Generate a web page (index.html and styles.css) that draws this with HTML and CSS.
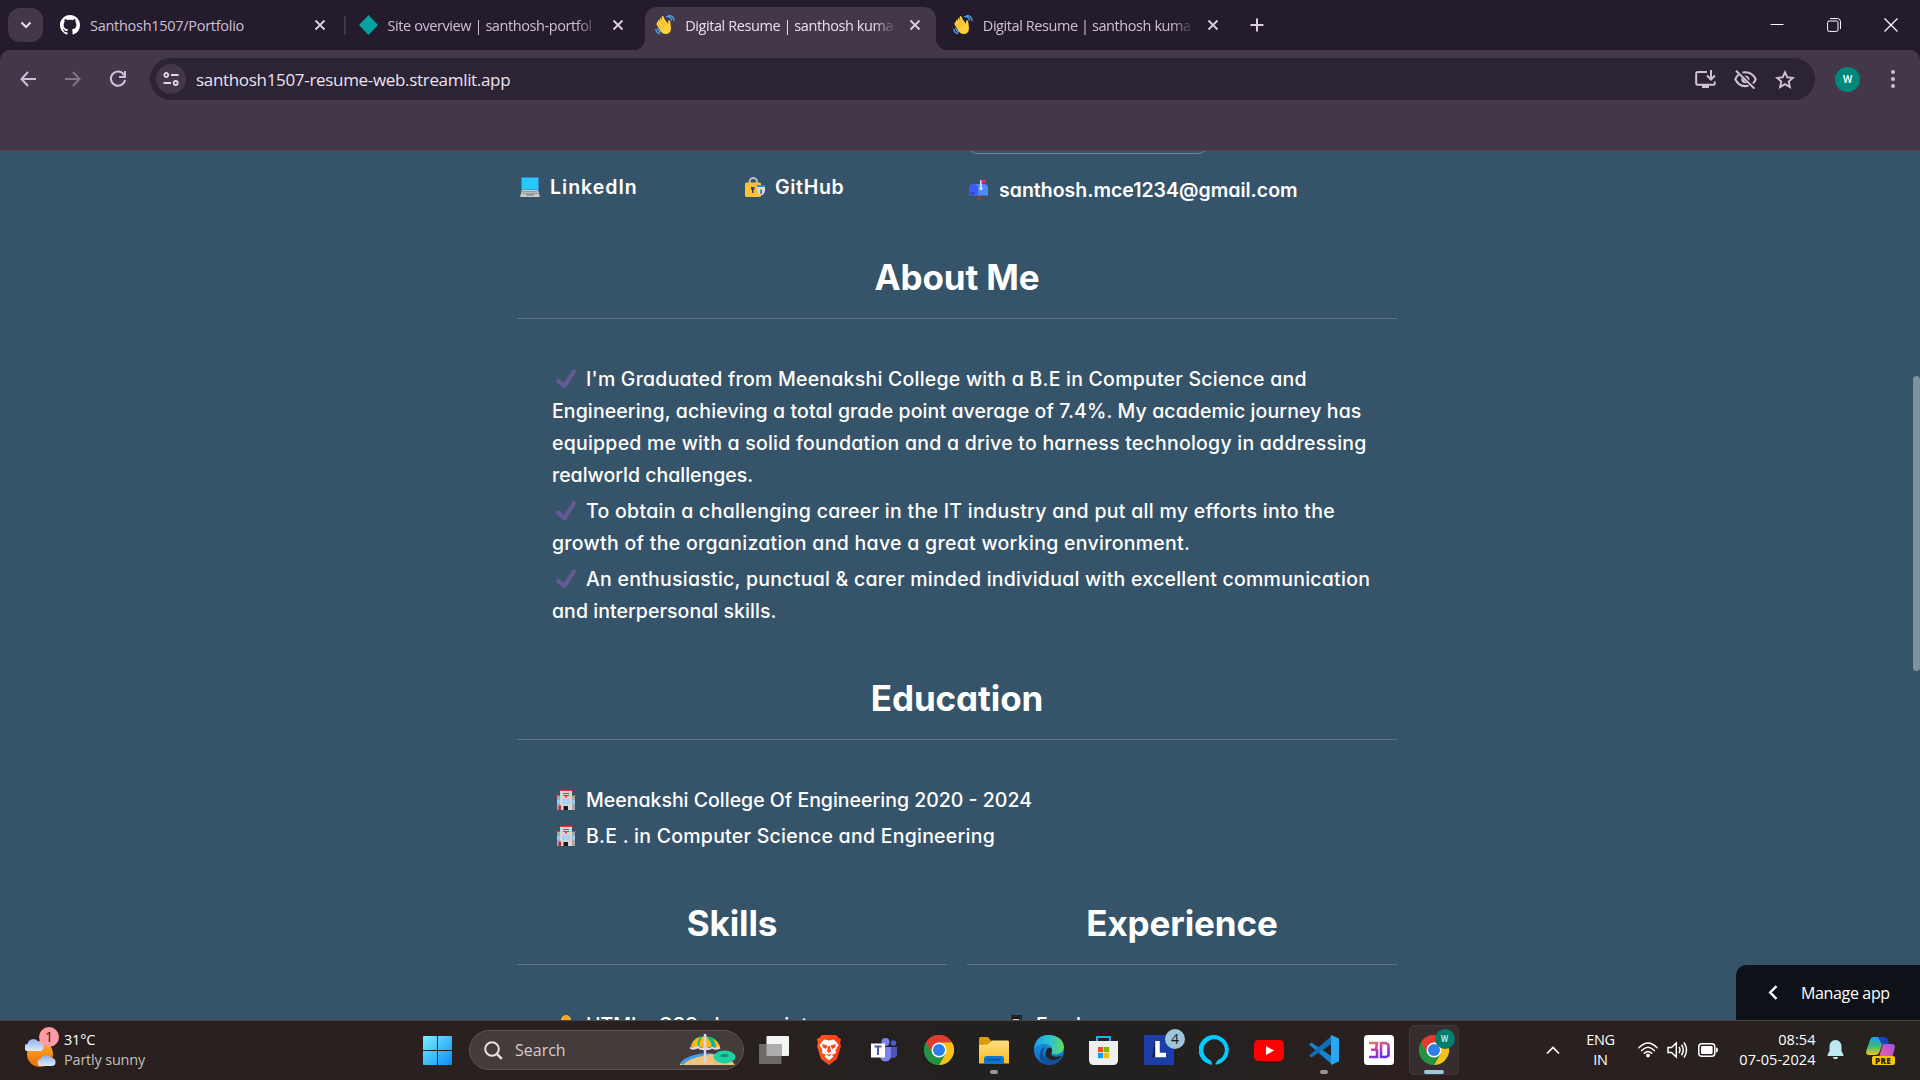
FILE: index.html
```html
<!DOCTYPE html>
<html lang="en">
<head>
<meta charset="utf-8">
<title>Digital Resume | santhosh kumar</title>
<link rel="stylesheet" href="styles.css">
</head>
<body>
<svg class="defs" width="0" height="0" aria-hidden="true">
  <defs>
    <linearGradient id="gWin" gradientUnits="userSpaceOnUse" x1="0" y1="0" x2="29" y2="29"><stop offset="0" stop-color="#7cf0ff"/><stop offset="1" stop-color="#0a8df5"/></linearGradient>
    <linearGradient id="gSun" x1="0" y1="0" x2="0" y2="1"><stop offset="0" stop-color="#fbb320"/><stop offset="1" stop-color="#ee6a10"/></linearGradient>
    <linearGradient id="gCloud" x1="0" y1="0" x2="0" y2="1"><stop offset="0" stop-color="#8fb0ee"/><stop offset="1" stop-color="#dfeafc"/></linearGradient>
    <linearGradient id="gFold" x1="0" y1="0" x2="0" y2="1"><stop offset="0" stop-color="#ffe083"/><stop offset="1" stop-color="#fcb91e"/></linearGradient>
    <linearGradient id="gEdge" x1="0" y1="0" x2="1" y2="0"><stop offset="0" stop-color="#1f9de6"/><stop offset=".55" stop-color="#2fc3cf"/><stop offset="1" stop-color="#63dd55"/></linearGradient>
    <linearGradient id="gEdge2" x1="0" y1="0" x2="0" y2="1"><stop offset="0" stop-color="#1b9de2"/><stop offset="1" stop-color="#1066c4"/></linearGradient>
    <linearGradient id="g30" gradientUnits="userSpaceOnUse" x1="5" y1="6" x2="12" y2="24"><stop offset="0" stop-color="#f08a3c"/><stop offset=".5" stop-color="#c840a8"/><stop offset="1" stop-color="#6a2ff0"/></linearGradient>
    <linearGradient id="gBrave" x1="0" y1="0" x2="1" y2="0"><stop offset="0" stop-color="#ff5a1a"/><stop offset="1" stop-color="#fb3a12"/></linearGradient>
    <linearGradient id="gCop" x1="0" y1="0" x2="0" y2="1"><stop offset="0" stop-color="#1da0f0"/><stop offset=".5" stop-color="#38b87c"/><stop offset="1" stop-color="#f2c821"/></linearGradient>
    <linearGradient id="gCop2" x1="1" y1="0" x2="0" y2="1"><stop offset="0" stop-color="#a24bea"/><stop offset="1" stop-color="#ff6a80"/></linearGradient>
    <symbol id="close" viewBox="0 0 12 12"><path d="M1.500 1.500l9 9M10.500 1.500l-9 9" fill="none" stroke="currentColor" stroke-width="1.800"/></symbol>
    <symbol id="wave" viewBox="0 0 20 20">
      <path d="M3 6.500 Q2.700 5 4 4.700 L5 6 Q4.200 3.200 5.600 2.800 L7 5 Q6 1 7.600 1 Q8.900 1 9.500 4 L13 9 Q12.800 5.500 14 5 Q15.300 4.800 15.400 8 L16 13 Q16 19 10.500 19 Q7 19 5 15 L1.500 9.500 Q1 7.500 3 6.500Z" fill="#fdcf3d"/>
      <path d="M5 6l4 6M7 4.800l3.800 6M3.200 8.500l4 5.500" stroke="#e2a21c" stroke-width=".7" fill="none"/>
      <path d="M11.500 1.700Q15.500 1 16.500 5M13.500 .6Q18.500 .5 19 5.500M.8 14.500Q1.300 17.800 4.600 18.500M2.700 13.500Q3.300 16 5.600 16.800" fill="none" stroke="#4aa3e6" stroke-width="1.300" stroke-linecap="round"/>
    </symbol>
    <symbol id="check" viewBox="0 0 20 20"><path d="M2.300 11.800L8.300 17.200L17.700 2.600" fill="none" stroke="#635994" stroke-width="4.400" stroke-linecap="round" stroke-linejoin="round"/></symbol>
    <symbol id="school" viewBox="0 0 20 20">
      <path d="M1 6h18v14H1z" fill="#a9a9ad"/><path d="M4 1h12v19H4z" fill="#d5d5d8"/>
      <path d="M4 0h12v1H4zM0 5h4v1H0zM16 5h4v1h-4zM7 3h6v1H7zM7 5h6v1H7zM9 6h2v1.500H9z" fill="#f8312f"/>
      <path d="M1 10h2.500v3.500H1zM16.500 10H19v3.500h-2.500zM6.500 9h3v5h-3zM10.500 9h3v5h-3z" fill="#8fd0ff"/>
      <path d="M6.500 11.300h7" stroke="#d5d5d8" stroke-width=".6"/>
      <path d="M7.500 16h4.500v4H7.500z" fill="#1c1c1c"/><path d="M2.500 15.500h2.500V20H2.500z" fill="#c8282f"/>
    </symbol>
    <symbol id="chrome" viewBox="0 0 30 30">
      <circle cx="15" cy="15" r="15" fill="#229342"/>
      <path d="M15 15L2 7.500A15 15 0 0 1 28 7.500H15Z" fill="#e33b2e"/>
      <path d="M15 7.500H28A15 15 0 0 1 15 30L21.500 18.700Z" fill="#fbc116"/>
      <path d="M2 7.500L8.600 18.800L15 8.500V4Z" fill="#e33b2e"/>
      <path d="M2 7.500A15 15 0 0 0 15 30L21.500 18.800L15 22L8.600 18.800Z" fill="#229342"/>
      <circle cx="15" cy="15" r="7.500" fill="#fff"/><circle cx="15" cy="15" r="6" fill="#2f7de9"/>
    </symbol>
  </defs>
</svg>

<header class="tabstrip">
  <button class="tab-search"><svg width="12" height="8" viewBox="0 0 12 8"><path d="M1.500 1.500L6 6L10.500 1.500" fill="none" stroke="currentColor" stroke-width="2"/></svg></button>
  <nav class="tabs">
    <div class="tab">
      <svg class="fav" viewBox="0 0 16 16"><path fill="#fff" d="M8 0C3.580 0 0 3.580 0 8c0 3.540 2.290 6.530 5.470 7.590.4.070.55-.17.55-.38 0-.19-.01-.82-.01-1.490-2.010.37-2.530-.49-2.690-.94-.09-.23-.48-.94-.82-1.130-.28-.15-.68-.52-.01-.53.63-.01 1.080.58 1.230.82.72 1.210 1.870.87 2.330.66.07-.52.28-.87.51-1.070-1.780-.2-3.640-.89-3.640-3.950 0-.87.31-1.590.82-2.150-.08-.2-.36-1.020.08-2.120 0 0 .67-.21 2.200.82.64-.18 1.320-.27 2-.27s1.360.09 2 .27c1.530-1.040 2.200-.82 2.200-.82.44 1.100.16 1.920.08 2.120.51.56.82 1.270.82 2.150 0 3.070-1.870 3.750-3.650 3.950.29.25.54.73.54 1.480 0 1.070-.01 1.930-.01 2.200 0 .21.15.46.55.38A8.010 8.010 0 0 0 16 8c0-4.420-3.580-8-8-8z"/></svg>
      <span class="title">Santhosh1507/Portfolio</span><svg class="x"><use href="#close"/></svg>
    </div>
    <div class="tab split">
      <svg class="fav" viewBox="0 0 20 20"><path d="M10.500 0L20 10L10.500 20L1 10Z" fill="#05a2a0"/></svg>
      <span class="title fade">Site overview | santhosh-portfol</span><svg class="x"><use href="#close"/></svg>
    </div>
    <div class="tab active">
      <svg class="fav"><use href="#wave"/></svg>
      <span class="title fade">Digital Resume | santhosh kuma</span><svg class="x"><use href="#close"/></svg>
    </div>
    <div class="tab">
      <svg class="fav"><use href="#wave"/></svg>
      <span class="title fade">Digital Resume | santhosh kuma</span><svg class="x"><use href="#close"/></svg>
    </div>
  </nav>
  <svg class="plus" width="14" height="14" viewBox="0 0 14 14"><path d="M7 .5v13M.5 7h13" stroke="currentColor" stroke-width="2"/></svg>
  <div class="window-buttons">
    <svg width="14" height="14" viewBox="0 0 14 14"><path d="M.5 6.500h13" stroke="#fff"/></svg>
    <svg width="14" height="14" viewBox="0 0 14 14" fill="none" stroke="#fff"><rect x=".6" y="3" width="10.400" height="10.400" rx="1.500"/><path d="M3 .6h7.500a3 3 0 0 1 3 3V11"/></svg>
    <svg width="14" height="14" viewBox="0 0 14 14"><path d="M.5 .5l13 13M13.500 .5l-13 13" stroke="#fff" stroke-width="1.200"/></svg>
  </div>
</header>

<div class="toolbar">
  <div class="navrow">
    <svg class="back" width="16" height="16" viewBox="0 0 16 16"><path d="M8 1L1.500 8L8 15M1.500 8H16" fill="none" stroke="currentColor" stroke-width="2"/></svg>
    <svg class="forward" width="16" height="16" viewBox="0 0 16 16"><path d="M8 1L14.500 8L8 15M14.500 8H0" fill="none" stroke="currentColor" stroke-width="2"/></svg>
    <svg class="reload" width="18" height="18" viewBox="0 0 18 18"><path d="M15.200 5.200A7.100 7.100 0 1 0 16 9.800" fill="none" stroke="currentColor" stroke-width="2"/><path d="M16 1v6h-6" fill="none" stroke="currentColor" stroke-width="2"/></svg>
    <div class="omnibox">
      <span class="site-info"><svg width="16" height="14" viewBox="0 0 16 14" fill="none" stroke="currentColor" stroke-width="1.800"><circle cx="3.300" cy="3" r="2"/><path d="M8 3h7.500M.5 11h7.500"/><circle cx="12.700" cy="11" r="2"/></svg></span>
      <span class="url">santhosh1507-resume-web.streamlit.app</span>
      <svg width="21" height="19" viewBox="0 0 21 19" fill="none" stroke="currentColor" stroke-width="2"><path d="M12 2H2.500Q1.200 2 1.200 3.200V13.500Q1.200 14.800 2.500 14.800H18.500Q19.800 14.800 19.800 13.500V11.500M16 0V9M12 5.500L16 9.500L20 5.500"/><path d="M7 15h7v3H7z" fill="currentColor" stroke="none"/><path d="M7.500 17h6"/></svg>
      <svg width="23" height="19" viewBox="0 0 23 19" fill="none" stroke="currentColor" stroke-width="2"><path d="M8.500 2.600Q17.500 .6 21.700 9.300Q20.800 11.700 18.900 13.400M14.500 15.700Q5.300 17.800 1.300 9.300Q2.300 6.600 4.500 4.800M2 .8L20.500 18.600"/><path d="M7.500 7.500L13 13Q9.500 14 7.800 11.500Q7 9.500 7.500 7.500ZM10.500 5.600Q14 5 15.300 8Q15.700 9.500 15.200 10.500Z" fill="currentColor" stroke="none"/></svg>
      <svg width="20" height="19" viewBox="0 0 20 19"><path d="M10 2.200L12.300 7.300L17.900 7.900L13.700 11.600L14.900 17L10 14.200L5.100 17L6.300 11.600L2.100 7.900L7.700 7.300Z" fill="none" stroke="currentColor" stroke-width="1.900"/></svg>
    </div>
    <span class="avatar">W</span>
    <svg class="menu" width="4" height="18" viewBox="0 0 4 18" fill="currentColor"><circle cx="2" cy="2" r="2"/><circle cx="2" cy="9" r="2"/><circle cx="2" cy="16" r="2"/></svg>
  </div>
</div>

<main class="page">
  <div class="resume">
    <div class="contact">
      <p><svg class="em" viewBox="0 0 20 20"><rect x="1" width="18" height="13" rx=".6" fill="#3d7fc0"/><path d="M2 1h16v11.500H2z" fill="#26c9fc"/><path d="M2 13h16l2 7H0z" fill="#c9c9cc"/><path d="M2.600 14.600h14.800M2 16.300h16" stroke="#85868c" stroke-width=".8"/><path d="M6 17.300h8v1.200H6z" fill="#7c7c82"/></svg><span class="l-linkedin">LinkedIn</span></p>
      <p><svg class="em" viewBox="0 0 20 20"><path d="M4.700 8V4.500a3.600 3.600 0 0 1 7.200 0V8" fill="none" stroke="#b8bcc2" stroke-width="2"/><rect y="5.500" width="16" height="14.500" rx="1.500" fill="#fac337"/><path d="M6 10h3.500v2.500H8.600V16H7v-3.500H6z" fill="#433b6b"/><path d="M12 8h8v5q0 4-4 5.500q-4-1.500-4-5.500z" fill="#dcdce0"/><path d="M12 8h8v2h-8z" fill="#2a8fe0"/><path d="M15.300 12.500h1.600V17h-1.600z" fill="#5a5a68"/></svg><span class="l-github">GitHub</span></p>
      <div class="mail">
        <div class="download"></div>
        <p><svg class="em" viewBox="0 0 20 20"><path d="M8.500 15h3.500v5H8.500z" fill="#7a4635"/><path d="M4.500 4H15q4 0 4 4v7.500H5z" fill="#4a8cff"/><path d="M0 9q0-5 4.500-5T9 9v6.500H0z" fill="#3d5cf5"/><path d="M1.500 12.700h4v1h-4z" fill="#2b2f7d"/><path d="M11 0h1.800v8.500H11z" fill="#dadae0"/><circle cx="12" cy="8.500" r="1.700" fill="#dadae0"/><path d="M12.500 0H17v3h-4.500z" fill="#f4265b"/></svg><span class="l-mail">santhosh.mce1234@gmail.com</span></p>
      </div>
    </div>

    <section>
      <h2>About Me</h2>
      <ul>
        <li><svg class="em"><use href="#check"/></svg><span class="w22">I'm Graduated from Meenakshi College with a B.E in Computer Science and</span><br>
          <span class="w10">Engineering, achieving a total grade point average of 7.4%. My academic journey has</span><br>
          <span class="w22">equipped me with a solid foundation and a drive to harness technology in addressing</span><br>
          <span>realworld challenges.</span></li>
        <li><svg class="em"><use href="#check"/></svg><span class="w28">To obtain a challenging career in the IT industry and put all my efforts into the</span><br>
          <span class="w28">growth of the organization and have a great working environment.</span></li>
        <li><svg class="em"><use href="#check"/></svg><span class="w25">An enthusiastic, punctual &amp; carer minded individual with excellent communication</span><br>
          <span class="w05">and interpersonal skills.</span></li>
      </ul>
    </section>

    <section>
      <h2>Education</h2>
      <ul>
        <li><svg class="em"><use href="#school"/></svg><span>Meenakshi College Of Engineering 2020 - 2024</span></li>
        <li><svg class="em"><use href="#school"/></svg><span class="w25">B.E . in Computer Science and Engineering</span></li>
      </ul>
    </section>

    <div class="two">
      <section>
        <h2>Skills</h2>
        <ul><li><svg class="em" viewBox="0 0 20 20"><circle cx="10" cy="5" r="5" fill="#f9a825"/><path d="M4 20q0-10 6-10t6 10z" fill="#f9a825"/></svg><span>HTML , CSS, Javascript</span></li></ul>
      </section>
      <section>
        <h2>Experience</h2>
        <ul><li><svg class="em" viewBox="0 0 20 20"><circle cx="10" cy="7" r="4.500" fill="#f0c8a8"/><path d="M5.500 7V1.500h9V7l-1.500-3H7z" fill="#1a1414"/><path d="M5 0h10v1.500H5z" fill="#222"/><path d="M15.500 0v8" stroke="#222"/></svg><span>Fresher</span></li></ul>
      </section>
    </div>
  </div>
  <div class="scrollbar"></div>
  <div class="manage"><svg width="10" height="15" viewBox="0 0 10 15"><path d="M8.500 1.200L2.200 7.500L8.500 13.800" fill="none" stroke="#fff" stroke-width="2.400"/></svg><span>Manage app</span></div>
</main>

<footer class="taskbar">
  <div class="weather">
    <svg width="34" height="35" viewBox="0 0 34 35"><circle cx="15" cy="21" r="13" fill="url(#gSun)"/><path d="M3 18a3.500 3.500 0 0 1-.5-7 6 6 0 0 1 11-2 5 5 0 0 1 3 9z" fill="url(#gCloud)"/><path d="M16 33a3.500 3.500 0 0 1 0-7 5.500 5.500 0 0 1 10-1 4 4 0 0 1 1 8z" fill="url(#gCloud)"/></svg>
    <span class="badge pink">1</span>
    <div><b>31°C</b><span>Partly sunny</span></div>
  </div>
  <div class="dock">
    <div class="cell"><svg width="29" height="29" viewBox="0 0 29 29" fill="url(#gWin)"><path d="M1 0h13v14H0V1q0-1 1-1zM15 0h13q1 0 1 1v13H15zM0 15h14v14H1q-1 0-1-1zM15 15h14v13q0 1-1 1H15z"/></svg></div>
    <div class="search">
      <svg width="19" height="19" viewBox="0 0 19 19" fill="none" stroke="#e6e2e2" stroke-width="2"><circle cx="8" cy="8" r="6.800"/><path d="M12.800 12.800l5 5" stroke-width="2.500"/></svg>
      <span>Search</span>
      <svg class="beach" width="56" height="32" viewBox="0 0 56 32"><path d="M0 30Q10 19 30 20Q48 20 55 31H0z" fill="#f2c27c"/><path d="M0 29Q10 18 34 19.500Q20 22 12 25Q5 28 3 31z" fill="#3fa0ea"/><path d="M11 12Q13 2 25 2Q37 2 40 13L36 15L32 12L25 15L18 12L14 15Z" fill="#12b48a"/><path d="M11 12Q13 5 20 3Q17 8 18 12L14 15ZM22 3h5Q31 8 32 12L25 15L19 12Q19 7 22 3ZM33 5Q39 8 40 13L36 15Q36 9 33 5Z" fill="#fdb913"/><path d="M10 13.500q2 1.500 4 1t4-1.500q3 3 7 1.500q4 1.500 7-1q3 2.500 8 0" fill="none" stroke="#e8d8ee" stroke-width="2"/><path d="M25 0v29" stroke="#dcd4e6" stroke-width="2.500"/><ellipse cx="44.500" cy="23" rx="11" ry="6.500" fill="#1fd0a2"/><ellipse cx="44.500" cy="21.500" rx="4" ry="1.600" fill="#0f8d78"/></svg>
    </div>
    <div class="cell"><svg width="30" height="28" viewBox="0 0 30 28"><rect x="7.500" y="0" width="22.500" height="20" rx="1" fill="#f4f4f4"/><rect x="0" y="8" width="22.500" height="20" rx="1" fill="#6d6a69"/><rect x="7.500" y="8" width="15" height="12" fill="#aeacac"/></svg></div>
    <div class="cell"><svg width="26" height="30" viewBox="0 0 26 30"><path d="M6 0h14l3 3 2 1-1 4 1 3-4 13-8 6-8-6L1 11l1-3-1-4 2-1z" fill="url(#gBrave)"/><path d="M8 4.500l5 1 5-1 4.500 5.500-3 5 .5 3-4 2 1.500 1.500-4.500 4-4.500-4L10 20l-4-2 .5-3-3-5z" fill="#fff"/><path d="M6 9l5.500 1.500L10 14l-3-1.500zM20 9l-5.500 1.500L16 14l3-1.500zM12 11h2l1 5.500-2 1.500-2-1.500zM9 18l4 1.700L17 18l-4 3.500z" fill="#fb4a14"/></svg></div>
    <div class="cell"><svg width="26" height="24" viewBox="0 0 26 24"><circle cx="14.500" cy="4" r="4" fill="#7b83eb"/><circle cx="22.500" cy="5" r="2.700" fill="#5059c9"/><path d="M18 9h8v7q0 4-4.500 4H18z" fill="#4b53bc"/><path d="M9 9h11v8q0 6-5.500 6.500Q9 23 9 17z" fill="#7b83eb"/><rect y="5.500" width="14" height="14" fill="#fff"/><path d="M3.500 8.500h7M7 8.500v8.500" stroke="#4b53bc" stroke-width="2"/></svg></div>
    <div class="cell"><svg width="30" height="30"><use href="#chrome"/></svg></div>
    <div class="cell run"><svg width="30" height="27" viewBox="0 0 30 27"><path d="M0 1.500Q0 0 1.500 0H9l3 3.500V9H0z" fill="#dd9a08"/><path d="M0 8L9 7.500L13 3.500H28.500Q30 3.500 30 5V26.500H0z" fill="url(#gFold)"/><path d="M5 27V22q0-3 3-3h14q3 0 3 3v5z" fill="#0f74cb"/><path d="M8.500 22.700h13" stroke="#0a4f93" stroke-width="1.300"/></svg></div>
    <div class="cell"><svg width="30" height="30" viewBox="0 0 30 30"><circle cx="15" cy="15" r="15" fill="url(#gEdge2)"/><path d="M0 13Q2 0 15 0Q29 1 30 12Q29 19 22 19.500Q17 19.500 18 16Q19 10 12 9Q4 8.500 0 13Z" fill="url(#gEdge)"/><path d="M11 12Q6 20 13 25Q20 29 28 22Q24 30 15 30Q4 28 6 18Q7 13 12 11Z" fill="#134f97"/><path d="M18 16.500Q15.500 20 20 21.500Q24 22.500 27.800 20.500Q24 27 17 25.500Q9 22 13 14Q15 12 17 13Q18.500 14 18 16.500Z" fill="#23201f"/><path d="M12 13Q9 19 14 23.500Q20 27 27.500 22Q24 29 16 27Q8 23 12 13Z" fill="#134f97"/></svg></div>
    <div class="cell"><svg width="29" height="29" viewBox="0 0 29 29"><path d="M8 6V1h13v5" fill="none" stroke="#19b4ea" stroke-width="2"/><path d="M0 5h29v19q0 5-5 5H5q-5 0-5-5z" fill="#efefef"/><path d="M9 11h5.200v5.200H9z" fill="#f25022"/><path d="M15 11h5.200v5.200H15z" fill="#7fba00"/><path d="M9 17h5.200v5.200H9z" fill="#00a4ef"/><path d="M15 17h5.200v5.200H15z" fill="#ffb900"/></svg></div>
    <div class="cell"><svg width="30" height="30" viewBox="0 0 30 30"><path d="M0 0h30v30H0z" fill="#1d3ea8"/><path d="M11 5L8 22.500L11 22z" fill="#0c2068"/><path d="M13.500 6v14H22" fill="none" stroke="#fff" stroke-width="4.500"/></svg><span class="badge blue">4</span></div>
    <div class="cell"><svg width="30" height="30" viewBox="0 0 30 30"><path d="M13.200 29.900A15 15 0 1 1 17 29.800Q15.800 28.800 17.500 26.700Q18.500 25.800 19 25A10.700 10.700 0 1 0 11 24.900Q13 26 13.200 29.900Z" fill="#00caff"/></svg></div>
    <div class="cell"><svg width="30" height="21" viewBox="0 0 30 21"><rect width="30" height="21" rx="4.500" fill="#f00"/><path d="M12 6l8 4.500-8 4.500z" fill="#fff"/></svg></div>
    <div class="cell run"><svg width="30" height="30" viewBox="0 0 30 30"><path d="M0 9.500L2.500 7.500L23 21.500V29.500z" fill="#1283cf"/><path d="M0 20.500L2.500 22.500L23 8.500V.5z" fill="#0c6fba"/><path d="M22 0L30 3.500V26.500L22 30Z" fill="#2aa7f2"/></svg></div>
    <div class="cell"><svg width="30" height="30" viewBox="0 0 30 30"><rect width="30" height="30" rx="3.500" fill="#fff"/><path d="M5 8h8l-1 6.500 1 .5v7H5M7 14.800h5M17 8h5l2.500 2v10.500L22 22h-5z" fill="none" stroke="url(#g30)" stroke-width="2.600"/></svg></div>
    <div class="cell current"><svg width="30" height="30"><use href="#chrome"/></svg><span class="badge teal">W</span></div>
  </div>
  <div class="tray">
    <svg class="up" width="14" height="9" viewBox="0 0 14 9"><path d="M1 7.500L7 1.500L13 7.500" fill="none" stroke="#fff" stroke-width="1.700"/></svg>
    <div class="lang">ENG<br>IN</div>
    <svg class="wifi" width="20" height="16" viewBox="0 0 20 16" fill="none" stroke="#fff" stroke-width="1.500" stroke-linecap="round"><path d="M1 5.800Q10-3.800 19 5.800M3.700 8.600Q10 2 16.300 8.600M6.300 11.300Q10 7.500 13.700 11.300"/><circle cx="10" cy="13.500" r="1.500" fill="#fff" stroke-width="1"/></svg>
    <svg class="vol" width="21" height="18" viewBox="0 0 21 18" fill="none" stroke="#fff" stroke-width="1.500"><path d="M1 6.500h3.500L9.300 2v14L4.500 11.500H1zM12 6q2 3 0 6M14.500 3.800q3.600 5.200 0 10.400M17 1.500q5 7.500 0 15"/></svg>
    <svg class="bat" width="20" height="14" viewBox="0 0 20 14"><rect x=".8" y=".8" width="16" height="12.400" rx="3" fill="none" stroke="#fff" stroke-width="1.500"/><rect x="3" y="3" width="11.600" height="8" rx="1.200" fill="#fff"/><path d="M18 4.500q2 0 2 2.500t-2 2.500z" fill="#fff"/></svg>
    <div class="clock">08:54<br>07-05-2024</div>
    <svg class="bell" width="17" height="20" viewBox="0 0 17 20" fill="#c0e8f2"><path d="M8.500 0Q14.300.5 14.500 6.500V11L16.500 15Q16.700 16 16 16H1Q.3 16 .5 15L2.500 11V6.500Q2.700.5 8.500 0ZM5.800 17h5.400q-.7 2.300-2.700 2.300T5.800 17z"/></svg>
    <div class="copilot"><svg width="30" height="29" viewBox="0 0 30 29"><path d="M7 1H16Q19 1 18 4L13 17Q12 19 9 19H3Q-1 19 .5 14L4 4Q5 1 7 1Z" fill="url(#gCop)"/><path d="M12 1h5.500Q21 1 22 4l1 4h-6q-2 0-2.500-2z" fill="#1746b8"/><path d="M18 8H26Q30 8 28.500 13L26 22Q25 25 22 25H10Q12 24 13 21L16 11Q16.500 8 18 8Z" fill="url(#gCop2)"/></svg><span>PRE</span></div>
  </div>
</footer>
</body>
</html>
```

FILE: styles.css
```css
* { box-sizing: border-box; }
body {
  margin: 0; width: 1920px; height: 1080px; overflow: hidden;
  display: flex; flex-direction: column;
  background: #241b2d; color: #fff; font-family: "Open Sans", sans-serif;
}
svg { display: block; flex: none; }
p, h2, ul { margin: 0; padding: 0; }
button { border: 0; padding: 0; }
.defs { position: absolute; }

/* tab strip */
.tabstrip { flex: none; height: 50px; display: flex; align-items: center; padding-left: 8px; }
.tab-search { width: 35px; height: 34px; border-radius: 12px; background: #42384a; color: #e8dcee; display: flex; align-items: center; justify-content: center; }
.tabs { position: relative; z-index: 0; display: flex; align-self: stretch; align-items: flex-end; margin-left: 7px; }
.tab { position: relative; width: 297.6px; height: 43px; padding: 0 12px 7px 10px; display: flex; align-items: center; color: #cdbfd6; font-size: 14.5px; letter-spacing: -.28px; }
.fav { width: 20px; height: 20px; }
.title { margin-left: 10px; width: 209px; padding-top: 1px; line-height: 22px; white-space: nowrap; overflow: hidden; }
.fade { -webkit-mask-image: linear-gradient(90deg, #000 90%, rgba(0, 0, 0, .1)); mask-image: linear-gradient(90deg, #000 90%, rgba(0, 0, 0, .1)); letter-spacing: -.42px; }
.x { width: 12px; height: 12px; margin-left: 15px; color: #dccfe4; }
.split::before { content: ""; position: absolute; left: -4px; top: 9px; width: 2px; height: 19px; background: #42384a; }
.active { color: #e8deee; }
.active::before { content: ""; position: absolute; z-index: -1; left: 0; right: 7px; top: 0; bottom: 0; background: #42384a; border-radius: 12px 12px 0 0; }
.active::after { content: ""; position: absolute; z-index: -1; left: -12px; right: -5px; bottom: 0; height: 12px;
  background: radial-gradient(circle at 0 0, transparent 12px, #42384a 12.5px) left / 12px 12px no-repeat, radial-gradient(circle at 12px 0, transparent 12px, #42384a 12.5px) right / 12px 12px no-repeat; }
.plus { margin-left: 10px; color: #dccfe4; }
.window-buttons { margin-left: auto; display: flex; gap: 43px; padding-right: 22px; }

/* toolbar */
.toolbar { flex: none; height: 101px; background: #42384a; border-radius: 10px 10px 0 0; border-bottom: 1px solid #55464f; padding-top: 8px; }
.navrow { height: 42px; display: flex; align-items: center; padding-left: 20px; color: #cfbedb; }
.forward { margin-left: 29px; color: #80748a; }
.reload { margin-left: 28px; }
.omnibox { margin-left: 23px; width: 1665px; height: 42px; border-radius: 21px; background: #2c2335; display: flex; align-items: center; padding: 0 20px 0 6px; color: #cfc3d6; }
.omnibox svg + svg { margin-left: 18px; }
.site-info { width: 30px; height: 30px; border-radius: 50%; background: #42384a; display: flex; align-items: center; justify-content: center; color: #e0d6e6; }
.url { flex: 1; margin-left: 10px; font-size: 17px; letter-spacing: -.32px; color: #ebe3ef; }
.avatar { margin-left: 20px; width: 25px; height: 25px; border-radius: 50%; background: #00897b; color: #fff; font: 500 11px/25px Roboto, sans-serif; text-align: center; }
.menu { margin-left: 31px; }

/* resume page */
.page { position: relative; flex: none; height: 869px; overflow: hidden; background: #365469; font: 500 19.5px/32px Inter, sans-serif; font-feature-settings: "cv11"; }
.resume { width: 880px; margin-left: 517px; }
.em { display: inline-block; width: 20px; height: 20px; margin: 0 10px 0 4px; vertical-align: -3px; }
.contact { margin-top: -45px; display: grid; grid-template-columns: 205px 205px 430px; gap: 20px; font-weight: 600; white-space: nowrap; }
.contact > p { padding-top: 65px; }
.contact .em { margin-left: 3px; }
.contact .mail .em { margin-left: 2px; }
.download { width: 241px; height: 48px; margin-bottom: 20px; border: 1px solid #6b8596; border-radius: 10px; }
.l-linkedin { letter-spacing: 1px; }
.l-github { letter-spacing: .7px; }
.l-mail { letter-spacing: 0; }
section { margin-top: 49px; }
h2 { font-size: 35px; line-height: 44px; font-weight: 660; letter-spacing: -.1px; text-align: center; padding-bottom: 19px; border-bottom: 1px solid #5a7588; }
ul { list-style: none; margin-top: 44px; padding-left: 35px; display: flex; flex-direction: column; gap: 4px; white-space: nowrap; }
.w05 { letter-spacing: .05px; }
.w10 { letter-spacing: .1px; }
.w22 { letter-spacing: .23px; }
.w25 { letter-spacing: .25px; }
.w28 { letter-spacing: .29px; }
.two { display: grid; grid-template-columns: 1fr 1fr; gap: 20px; }
.scrollbar { position: absolute; right: 0; top: 225px; width: 7px; height: 295px; border-radius: 4px; background: #7d919f; }
.manage { position: absolute; right: 0; bottom: 0; width: 184px; height: 55px; border-radius: 10px 0 0 0; background: #0e1117; display: flex; align-items: center; padding-left: 32px; font: 16px "Open Sans", sans-serif; letter-spacing: -.35px; }
.manage span { margin-left: 23px; white-space: nowrap; }

/* taskbar */
.taskbar { flex: none; height: 60px; border-top: 1px solid #4b4541; padding-bottom: 1px; display: flex; align-items: center; background: linear-gradient(90deg, #291f1f 0, #2a201f 35%, #222120 52%, #232120 62%, #2b201f 72%, #2a201f 82%, #26221f 100%); font-size: 14.5px; line-height: 20px; }
.weather { position: relative; width: 410px; padding-left: 25px; display: flex; align-items: center; color: #c4bfbe; }
.weather div { margin-left: 5px; letter-spacing: -.2px; }
.weather b { display: block; font-weight: 400; color: #fff; }
.badge { position: absolute; width: 20px; height: 20px; border-radius: 50%; text-align: center; font-size: 14px; line-height: 20px; color: #1a1a1a; }
.pink { left: 39px; top: -3px; background: #ff9aa6; }
.dock { display: flex; align-items: center; }
.cell { position: relative; width: 55px; height: 50px; display: flex; align-items: center; justify-content: center; }
.run::after, .current::after { content: ""; position: absolute; bottom: 1px; left: 50%; width: 8px; height: 4px; margin-left: -4px; border-radius: 2px; background: #9a9796; }
.current { width: 50px; margin-left: 2.5px; background: #372d2e; border: 1px solid #41383a; border-radius: 5px; }
.current::after { width: 20px; margin-left: -10px; bottom: 0; background: #9cc6dc; }
.blue { right: 1px; top: 4px; background: #9cc6dc; }
.teal { right: 3px; top: 3px; background: #047d70; color: #cfe8e4; font: 500 8.5px/20px Roboto, sans-serif; }
.search { position: relative; width: 275px; height: 40px; margin: 0 2px 0 4px; border-radius: 20px; background: #443c3b; border: 1px solid #5c5453; display: flex; align-items: center; padding: 0 7px 0 14px; font-size: 16px; color: #d2cdcc; }
.search span { margin-left: 12px; }
.beach { margin-left: auto; }
.tray { flex: 1; display: flex; align-items: center; }
.up { margin-left: 87px; }
.lang { width: 36px; margin-left: 23px; text-align: center; letter-spacing: -.3px; }
.wifi { margin-left: 19px; }
.vol { margin-left: 9px; }
.bat { margin-left: 10px; }
.clock { width: 80px; margin-left: 18px; text-align: right; letter-spacing: .05px; }
.bell { margin-left: 11px; }
.copilot { position: relative; margin-left: 22px; }
.copilot span { position: absolute; left: 6px; bottom: 0; width: 23px; height: 9px; border-radius: 2px; background: #fbc60c; color: #2a2000; font: 800 8px/9px "Open Sans", sans-serif; text-align: center; letter-spacing: .4px; }
```
